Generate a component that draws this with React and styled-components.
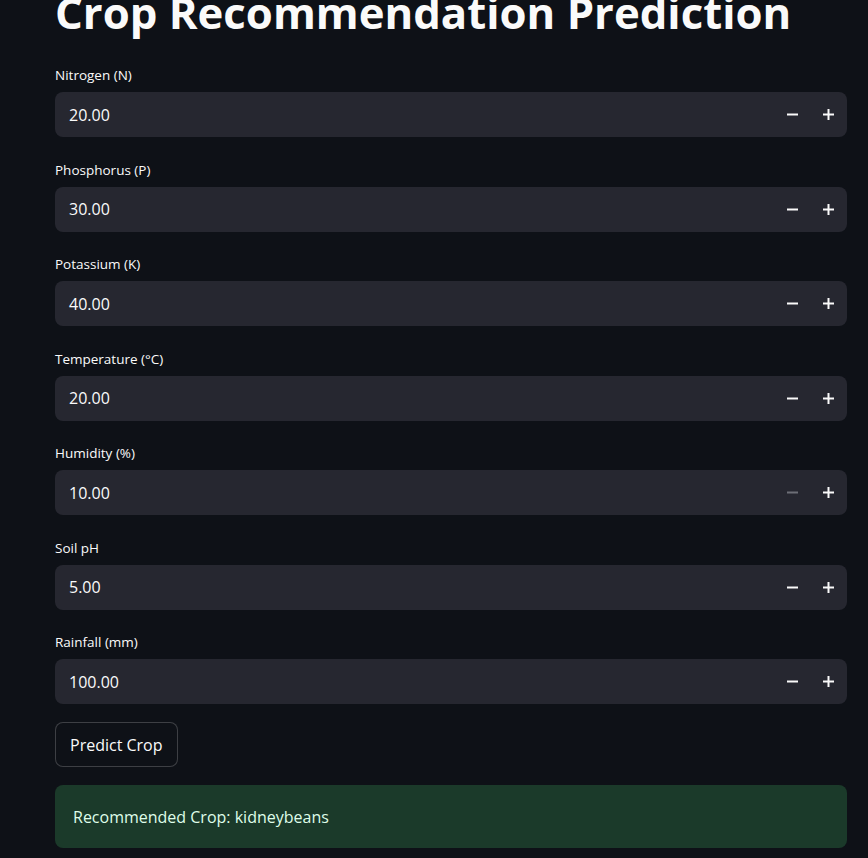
import React from 'react'
import styled, { createGlobalStyle } from 'styled-components'

const GlobalStyle = createGlobalStyle`
	html, body {
		margin: 0;
		padding: 0;
		background: #0e1117;
		overflow: hidden;
	}
	body {
		font-family: "Open Sans", "Liberation Sans", sans-serif;
		color: #fafafa;
	}
`

const Page = styled.div`
	width: 868px;
	height: 858px;
	padding: 0 21px 0 55px;
	box-sizing: border-box;
	overflow: hidden;
`

const Title = styled.h1`
	margin: -16px 0 0;
	font-size: 43.7px;
	font-weight: 700;
	line-height: 56px;
	letter-spacing: 0;
	white-space: nowrap;
	color: #fafafa;
`

const Form = styled.div`
	display: flex;
	flex-direction: column;
	gap: 22.5px;
	margin-top: 25px;
`

const Field = styled.div`
	display: flex;
	flex-direction: column;
`

const Label = styled.label`
	font-size: 13.5px;
	line-height: 21px;
	height: 21px;
	margin-bottom: 6px;
	color: #fafafa;
`

const InputBox = styled.div`
	display: flex;
	align-items: center;
	height: 45px;
	border-radius: 8px;
	background: #262730;
	overflow: hidden;
`

const Value = styled.div`
	flex: 1;
	padding-left: 14px;
	font-size: 16px;
	color: #fafafa;
`

const StepButton = styled.button`
	width: 36px;
	height: 45px;
	padding: 0;
	border: none;
	background: transparent;
	display: flex;
	align-items: center;
	justify-content: center;
	color: ${(p) => (p.disabled ? '#6c6e76' : '#fafafa')};
	cursor: pointer;
`

const Actions = styled.div`
	display: flex;
	flex-direction: column;
	align-items: flex-start;
	gap: 18px;
	margin-top: -4.5px;
`

const PrimaryButton = styled.button`
	height: 45px;
	padding: 0 14px;
	border: 1px solid rgba(250, 250, 250, 0.2);
	border-radius: 8px;
	background: #0e1117;
	color: #fafafa;
	font-family: inherit;
	font-size: 16px;
`

const Success = styled.div`
	align-self: stretch;
	height: 63px;
	display: flex;
	align-items: center;
	padding-left: 18px;
	border-radius: 8px;
	background: #1b3a2a;
	color: #dffde9;
	font-size: 16px;
`

const Minus = () => (
	<svg width="11" height="11" viewBox="0 0 11 11">
		<rect x="0" y="4.5" width="11" height="2" fill="currentColor" />
	</svg>
)

const Plus = () => (
	<svg width="11" height="11" viewBox="0 0 11 11">
		<rect x="0" y="4.5" width="11" height="2" fill="currentColor" />
		<rect x="4.5" y="0" width="2" height="11" fill="currentColor" />
	</svg>
)

const fields = [
	{ label: 'Nitrogen (N)', value: '20.00' },
	{ label: 'Phosphorus (P)', value: '30.00' },
	{ label: 'Potassium (K)', value: '40.00' },
	{ label: 'Temperature (°C)', value: '20.00' },
	{ label: 'Humidity (%)', value: '10.00', atMin: true },
	{ label: 'Soil pH', value: '5.00' },
	{ label: 'Rainfall (mm)', value: '100.00' },
]

const NumberInput = ({ label, value, atMin }) => (
	<Field>
		<Label>{label}</Label>
		<InputBox>
			<Value>{value}</Value>
			<StepButton disabled={atMin}>
				<Minus />
			</StepButton>
			<StepButton>
				<Plus />
			</StepButton>
			<div style={{ width: 1 }} />
		</InputBox>
	</Field>
)

const App = () => {
	return (
		<Page>
			<GlobalStyle />
			<Title>Crop Recommendation Prediction</Title>
			<Form>
				{fields.map((f) => (
					<NumberInput key={f.label} {...f} />
				))}
				<Actions>
					<PrimaryButton>Predict Crop</PrimaryButton>
					<Success>Recommended Crop: kidneybeans</Success>
				</Actions>
			</Form>
		</Page>
	)
}

export default App
